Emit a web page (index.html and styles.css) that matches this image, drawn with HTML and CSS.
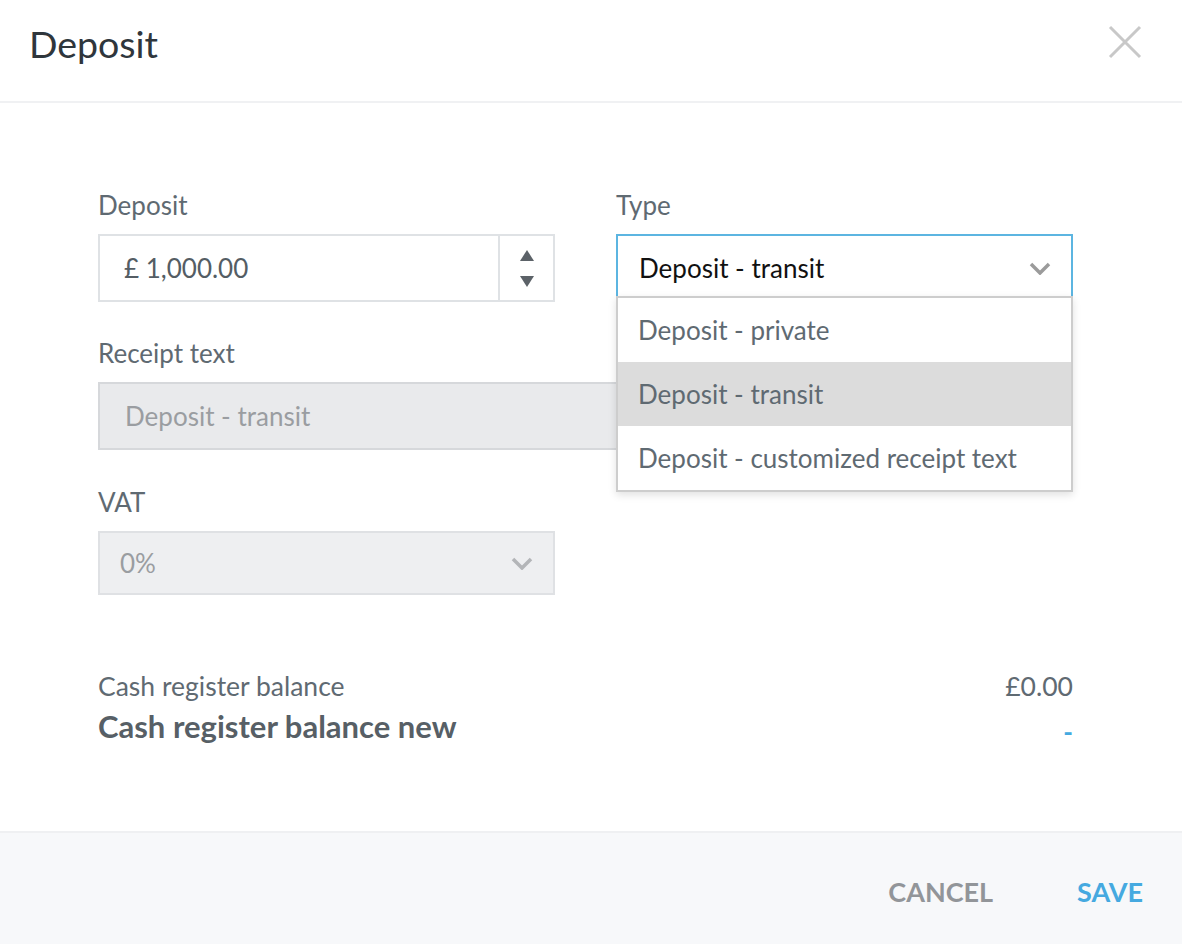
FILE: index.html
```html
<!DOCTYPE html>
<html>
<head>
  <title>Deposit</title>
  <link rel="stylesheet" href="styles.css">
</head>
<body>
<div class="modal">
  <div class="modal-head">
    <h1>Deposit</h1>
    <button class="close" aria-label="Close">
      <svg width="34" height="34" viewBox="0 0 34 34"><path d="M2 2 L32 32 M32 2 L2 32" stroke="#c8c8c8" stroke-width="3" fill="none"/></svg>
    </button>
  </div>

  <div class="modal-body">
    <div class="row">
      <div class="field">
        <label>Deposit</label>
        <div class="input number">
          <span class="value">£ 1,000.00</span>
          <div class="spin">
            <svg width="14" height="11" viewBox="0 0 14 11"><path d="M7 0 L14 11 L0 11 Z" fill="#5c6268"/></svg>
            <svg width="14" height="11" viewBox="0 0 14 11"><path d="M0 0 L14 0 L7 11 Z" fill="#5c6268"/></svg>
          </div>
        </div>
      </div>
      <div class="field type">
        <label>Type</label>
        <div class="select focus">
          <span class="value">Deposit - transit</span>
          <svg class="chev" width="22" height="13" viewBox="0 0 22 13"><path d="M2 2 L11 11 L20 2" stroke="#9b9b9b" stroke-width="3.5" fill="none"/></svg>
        </div>
        <ul class="dropdown">
          <li>Deposit - private</li>
          <li class="active">Deposit - transit</li>
          <li>Deposit - customized receipt text</li>
        </ul>
      </div>
    </div>

    <div class="field receipt">
      <label>Receipt text</label>
      <div class="input disabled"><span class="value">Deposit - transit</span></div>
    </div>

    <div class="row">
      <div class="field">
        <label>VAT</label>
        <div class="select disabled">
          <span class="value">0%</span>
          <svg class="chev" width="22" height="13" viewBox="0 0 22 13"><path d="M2 2 L11 11 L20 2" stroke="#b3b5b8" stroke-width="3.5" fill="none"/></svg>
        </div>
      </div>
      <div class="field"></div>
    </div>

    <div class="balance">
      <div class="line"><span>Cash register balance</span><span>£0.00</span></div>
      <div class="line total"><span>Cash register balance new</span><span class="dash">-</span></div>
    </div>
  </div>

  <div class="modal-foot">
    <button class="btn cancel">CANCEL</button>
    <button class="btn save">SAVE</button>
  </div>
</div>
</body>
</html>
```

FILE: styles.css
```css
* {
    box-sizing: border-box;
}
body {
    margin: 0;
    font-family: Lato, "Open Sans", sans-serif;
    background-color: #fff;
    color: #5f6a72;
}
.modal {
    width: 1182px;
    height: 944px;
    display: flex;
    flex-direction: column;
}
.modal-head {
    height: 103px;
    display: flex;
    align-items: center;
    justify-content: space-between;
    padding: 0 40px 0 29px;
    border-bottom: 2px solid #f0f1f3;
}
.modal-head h1 {
    margin: 0 0 15px 0;
    font-size: 37.5px;
    font-weight: 400;
    color: #2f363c;
}
.close {
    border: none;
    background: none;
    padding: 0;
    margin-bottom: 14px;
    cursor: pointer;
}
.modal-body {
    flex: 1;
    padding: 86px 109px 0 98px;
}
.row {
    display: flex;
    gap: 61px;
}
.row .field {
    flex: 1;
}
.field {
    margin-bottom: 35px;
}
.field.receipt {
    margin-bottom: 36px;
}
.field label {
    display: block;
    font-size: 26px;
    line-height: 32px;
    margin-bottom: 13px;
}
.type {
    position: relative;
}
.input, .select {
    height: 68px;
    border: 2px solid #dfe2e5;
    display: flex;
    align-items: center;
    font-size: 26px;
    background-color: #fff;
}
.value {
    flex: 1;
    padding-left: 24px;
}
.number .value {
    color: #545d64;
}
.spin {
    width: 55px;
    height: 100%;
    border-left: 2px solid #dfe2e5;
    display: flex;
    flex-direction: column;
    align-items: center;
    justify-content: center;
    gap: 15px;
}
.select .chev {
    margin-right: 20px;
}
.select.focus {
    border-color: #5cb5e1;
    color: #111;
}
.select.focus .value {
    padding-left: 21px;
}
.disabled {
    background-color: #e9eaec;
    border-color: #d6d8db;
    color: #9a9da1;
}
.select.disabled {
    height: 64px;
    background-color: #eeeff1;
    border-color: #dfe1e4;
}
.disabled .value {
    padding-left: 25px;
}
.select.disabled .value {
    padding-left: 20px;
}
.dropdown {
    position: absolute;
    top: 107px;
    left: 0;
    right: 0;
    margin: 0;
    padding: 0;
    list-style: none;
    background-color: #fff;
    border: 2px solid #cdcdcd;
    box-shadow: 0 3px 8px rgba(0, 0, 0, 0.12);
}
.dropdown li {
    height: 64px;
    line-height: 64px;
    padding-left: 20px;
    font-size: 26px;
    color: #5f6a72;
}
.dropdown li.active {
    background-color: #dcdcdc;
}
.balance {
    margin-top: 39px;
}
.line {
    display: flex;
    justify-content: space-between;
    font-size: 26.5px;
    line-height: 34px;
}
.line.total {
    font-size: 31px;
    font-weight: 700;
    line-height: 46px;
    color: #575f66;
}
.dash {
    color: #45a9e0;
    font-weight: 700;
    font-size: 26px;
    padding-top: 6px;
}
.modal-foot {
    height: 113px;
    background-color: #f7f8fa;
    border-top: 2px solid #eff0f2;
    display: flex;
    justify-content: flex-end;
    align-items: center;
    gap: 84px;
    padding: 6px 39px 0 0;
}
.btn {
    border: none;
    background: none;
    padding: 0;
    font-family: Lato, "Open Sans", sans-serif;
    font-size: 27px;
    font-weight: 700;
    cursor: pointer;
}
.cancel {
    color: #929599;
}
.save {
    color: #45a9e0;
}
```
